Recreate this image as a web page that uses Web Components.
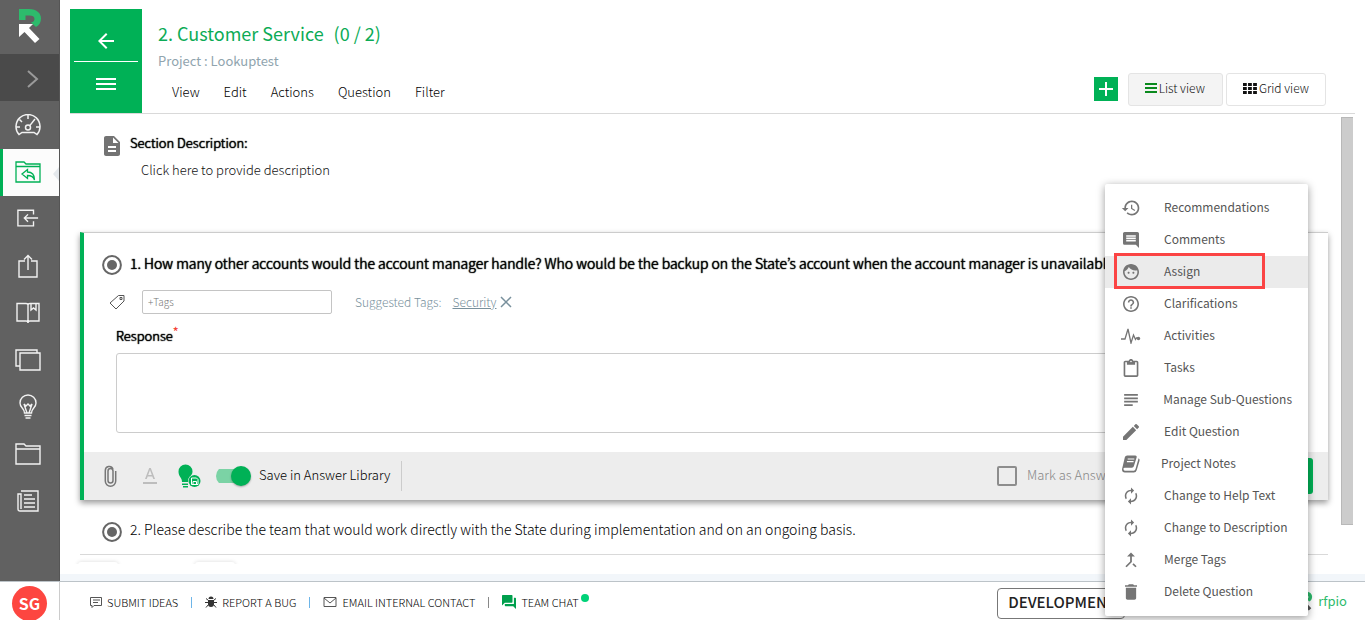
<!DOCTYPE html>
<html lang="en">
<head>
<meta charset="utf-8">
<title>Customer Service - Lookuptest</title>
<style>
html,body{margin:0;height:100%}
body{font-family:"Noto Sans CJK KR","Open Sans",sans-serif;font-size:13px;font-weight:300;line-height:20px;color:#222;background:#fff;overflow:hidden;--strong:0 0 1px #000,0 0 1px #000}
</style>
</head>
<body>
<rfp-app></rfp-app>
<script>
const define = (tag, css, html, init) => customElements.define(tag, class extends HTMLElement {
  constructor() {
    super();
    const t = document.createElement('template');
    t.innerHTML = `<style>*{box-sizing:border-box}${css}</style>${html}`;
    this.attachShadow({mode: 'open'}).append(t.content.cloneNode(true));
  }
  connectedCallback() { if (init) init(this, this.shadowRoot); }
});

const line = (w, d) => `<g fill="none" stroke="currentColor" stroke-width="${w}">${d}</g>`;
const ICONS = {
  back: ['0 0 24 24', '<path d="M20 11H7.83l5.59-5.59L12 4l-8 8 8 8 1.41-1.41L7.83 13H20z"/>'],
  bars: ['0 0 20 14', '<path d="M0 1h20v2H0zM0 6h20v2H0zM0 11h20v2H0z"/>'],
  list: ['0 0 12 10', '<path d="M0 0h12v2H0zM0 4h12v2H0zM0 8h12v2H0z"/>'],
  chevron: ['0 0 12 18', line(2, '<path d="M1 1l9 8-9 8"/>')],
  gauge: ['0 0 26 22', line(1.5, '<path d="M4 20.500A12 12 0 1 1 22 20.500L19 18.500H7z"/><circle cx="13" cy="13.500" r="2.500"/><path d="M14.800 11.600L20 5M13 1v4M1 13h4M21 13h4M4.500 5.500L7 8"/>')],
  reply: ['0 0 26 22', line(1.3, '<path d="M1 21V1h8l2 2h14v18zM1 5.500h24"/><path d="M12.500 8.500L7 13l5.500 4.500v-3c4 0 6 1 7 4.500 0-5-2-8-7-8z"/>')],
  exit: ['0 0 24 20', line(1.5, '<path d="M18 5.500V1H1v17h17v-5M23 9.500H8M12 5.500l-4 4 4 4"/>')],
  share: ['0 0 20 24', line(1.4, '<path d="M7 7H1v16h18V7h-6M10 16V1.500M6 5.500l4-4 4 4"/>')],
  book: ['0 0 24 22', line(1.4, '<path d="M1 1.500h9q2 0 2 1.500 0-1.500 2-1.500h9V19H14q-2 0-2 2 0-2-2-2H1zM12 2v18M15 2v6l2.500-2L20 8V2"/>')],
  copies: ['0 0 26 22', line(1.4, '<path d="M5 4h20v17H5zM5 17H1V1h21v3"/>')],
  bulb: ['0 0 18 26', line(1.4, '<path d="M5.500 19c0-5-4.500-5-4.500-10a8 8 0 0 1 16 0c0 5-4.500 5-4.500 10zM8 19L5 10l2 2 2-2 2 2 2-2-3 9M5.500 21.500h7M6.500 24h5"/>')],
  folder: ['0 0 26 22', line(1.4, '<path d="M1 21V1h8l2 2h14v18zM1 6h24"/>')],
  news: ['0 0 22 22', line(1.4, '<path d="M4 1h17v20H3q-2 0-2-2V4h3v15M7 5h8M7 9h11M7 13h11M7 17h11"/>')],
  doc: ['4 2 16 20', '<path d="M14 2H6c-1.100 0-2 .9-2 2v16c0 1.100.9 2 2 2h12c1.100 0 2-.9 2-2V8zm2 16H8v-2h8zm0-4H8v-2h8zm-3-5V3.500L18.500 9z"/>'],
  radio: ['0 0 20 20', '<circle cx="10" cy="10" r="8.900" fill="none" stroke="currentColor" stroke-width="2"/><circle cx="10" cy="10" r="5"/>'],
  tag: ['0 0 16 16', line(1, '<path d="M9.500 1.500H15V7l-8 8L1 9zM11 3.500h2v2h-2z"/>')],
  cross: ['0 0 12 12', line(1.5, '<path d="M1 1l10 10M11 1L1 11"/>')],
  clip: ['0 0 12 22', line(1.5, '<path d="M8.500 6v9.500a2.500 2.500 0 0 1-5 0V6M3.500 6a2.200 2.200 0 0 1 5 0M11.200 6v10a5.200 5.200 0 0 1-10.400 0V5.500a4 4 0 0 1 7.700-1.500"/>')],
  fontcolor: ['0 0 14 16', '<path d="M0 14h14v2H0zM6.200 0L2 11h1.700l1-2.600h4.600l1 2.600H12L7.800 0zM5.200 7L7 2l1.800 5z"/>'],
  bulbsave: ['0 0 23 24', '<path d="M4 18c0-5-3.500-5-3.500-10.500a7 7 0 0 1 14 0C14.500 10 13 11 12 13l-2 5zM4 19.500h6V21H4zM5 22h5v1.500H5z"/><circle cx="16.500" cy="17" r="6.500" fill="#ededed"/><circle cx="16.500" cy="17" r="6"/><path d="M13.500 14h5l1.500 1.500v5h-6.500zM15 20v-2.500h3.500V20" fill="none" stroke="#fff" stroke-width="1"/>'],
  grid: ['0 0 13 10', '<path d="M0 0h3.500v2.600H0zM4.700 0h3.500v2.600H4.700zM9.400 0h3.500v2.600H9.400zM0 3.700h3.500v2.600H0zM4.700 3.700h3.500v2.600H4.700zM9.400 3.700h3.500v2.600H9.400zM0 7.400h3.500V10H0zM4.700 7.400h3.500V10H4.700zM9.400 7.400h3.500V10H9.400z"/>'],
  plus: ['0 0 16 16', '<path d="M7 1h2v6h6v2H9v6H7V9H1V7h6z"/>'],
  history: ['0 0 24 24', '<path d="M13.500 8H12v5l4.280 2.540.72-1.210-3.500-2.080zM13 3c-4.970 0-9 4.030-9 9H1l4 4 4-4H6c0-3.860 3.140-7 7-7s7 3.140 7 7-3.140 7-7 7c-1.900 0-3.620-.76-4.880-1.990L6.700 18.420C8.320 20.010 10.550 21 13 21c4.970 0 9-4.030 9-9s-4.030-9-9-9z"/>'],
  comment: ['2 2 20 20', '<path d="M21.990 4c0-1.100-.89-2-1.990-2H4c-1.100 0-2 .9-2 2v12c0 1.100.9 2 2 2h14l4 4zM18 14H6v-2h12zm0-3H6V9h12zm0-3H6V6h12z"/>'],
  face: ['2 2 20 20', '<path d="M9 11.750c-.69 0-1.250.56-1.250 1.250s.56 1.250 1.250 1.250 1.250-.56 1.250-1.250-.56-1.250-1.250-1.250zm6 0c-.69 0-1.250.56-1.250 1.250s.56 1.250 1.250 1.250 1.250-.56 1.250-1.250-.56-1.250-1.250-1.250zM12 2C6.480 2 2 6.480 2 12s4.480 10 10 10 10-4.480 10-10S17.520 2 12 2zm0 18c-4.410 0-8-3.590-8-8 0-.29.02-.58.05-.86 2.360-1.050 4.230-2.980 5.210-5.370C11.070 8.330 14.050 10 17.420 10c.78 0 1.530-.09 2.250-.26.210.71.330 1.470.330 2.260 0 4.410-3.590 8-8 8z"/>'],
  help: ['2 2 20 20', '<path d="M11 18h2v-2h-2zm1-16C6.480 2 2 6.480 2 12s4.480 10 10 10 10-4.480 10-10S17.520 2 12 2zm0 18c-4.410 0-8-3.590-8-8s3.590-8 8-8 8 3.590 8 8-3.590 8-8 8zm0-14c-2.210 0-4 1.790-4 4h2c0-1.100.9-2 2-2s2 .9 2 2c0 2-3 1.750-3 5h2c0-2.250 3-2.500 3-5 0-2.210-1.790-4-4-4z"/>'],
  pulse: ['0 0 20 16', line(1.300, '<path d="M0 11h4L7 1l3 14 2.500-8 2 4.500 1-1.500H18"/>') + '<circle cx="17.500" cy="10.500" r="1.700"/>'],
  clipboard: ['3 0 18 22', '<path d="M19 2h-4.180C14.400.84 13.300 0 12 0S9.600.84 9.180 2H5c-1.100 0-2 .9-2 2v16c0 1.100.9 2 2 2h14c1.100 0 2-.9 2-2V4c0-1.100-.9-2-2-2zm-7 0c.55 0 1 .45 1 1s-.45 1-1 1-1-.45-1-1 .45-1 1-1zm7 18H5V4h2v3h10V4h2z"/>'],
  subject: ['4 5 16 14', '<path d="M14 17H4v2h10zm6-8H4v2h16zM4 15h16v-2H4zM4 5v2h16V5z"/>'],
  edit: ['3 3 18 18', '<path d="M3 17.250V21h3.750L17.810 9.940l-3.750-3.750zM20.710 7.040a1 1 0 0 0 0-1.410l-2.340-2.340a1 1 0 0 0-1.410 0l-1.830 1.830 3.750 3.750z"/>'],
  notes: ['0 0 19 18', '<path d="M5.500 0H14q2 0 1.500 2l-3 9.500Q12 13 10.500 13H3q-1.600 0-1.500 1.300Q1.800 16 3 16h9.500q1.200 0 1.700-1.500L17.500 3q1.500 1 1 2.500L15.500 15.500q-.7 2.500-3 2.500H3Q0 18 0 14.500L3 2Q3.500 0 5.500 0z"/><path d="M6 3.800h7M5.200 6.500h7" stroke="#fff" stroke-width="1.100"/>'],
  cycle: ['3 1 18 22', '<path d="M12 6v3l4-4-4-4v3c-4.420 0-8 3.580-8 8 0 1.570.46 3.030 1.240 4.260L6.700 14.800A5.870 5.870 0 0 1 6 12c0-3.310 2.690-6 6-6zm6.760 1.740L17.300 9.200c.44.84.7 1.790.7 2.800 0 3.310-2.690 6-6 6v-3l-4 4 4 4v-3c4.420 0 8-3.580 8-8 0-1.570-.46-3.030-1.240-4.260z"/>'],
  merge: ['4 2 16 20', '<path d="M17 20.410L18.410 19 15 15.590 13.590 17zM7.500 8H11v5.590L5.590 19 7 20.410l6-6V8h3.500L12 3.500z"/>'],
  trash: ['5 3 14 18', '<path d="M6 19c0 1.100.9 2 2 2h8c1.100 0 2-.9 2-2V7H6zM19 4h-3.500l-1-1h-5l-1 1H5v2h14z"/>'],
  idea: ['0 0 12 11', line(1, '<path d="M.5.500h11v8H4l-2 2v-2H.5zM3 3h7M3 5.500h5"/>')],
  bug: ['0 0 12 12', '<path d="M3.500 3a2.500 2.500 0 0 1 5 0zM3 4h6v4a3 3 0 0 1-6 0z"/>' + line(1, '<path d="M1 2.500l2.500 2M11 2.500l-2.500 2M0 6.500h12M1 11.500l2.500-3M11 11.500l-2.500-3"/>')],
  mail: ['0 0 13 10', line(1, '<path d="M.5.500h12v9H.5zM.5 1l6 5 6-5"/>')],
  chat: ['2 2 20 20', '<path d="M21 6h-2v9H6v2c0 .55.450 1 1 1h11l4 4V7c0-.55-.45-1-1-1zm-4 6V3c0-.55-.45-1-1-1H3c-.55 0-1 .45-1 1v14l4-4h10c.55 0 1-.45 1-1z"/>'],
  logo: ['0 0 24 36', '<path fill="#2dbb6c" d="M1 1h10c8 0 12 4.500 12 9.500 0 4-2 7-5 8.500l-5-4.500c2.500-.5 3.500-2 3.500-3.500 0-2.500-2-3.500-5-3.500H7.500V12H1z"/><path d="M1 16h14l-4 4L21.500 31 17 35 6.500 24 1 29z"/>']
};

define('rfp-icon', ':host{display:block;flex:none}svg{display:block;width:100%;height:100%;fill:currentColor}', '<svg aria-hidden="true"></svg>', (el, root) => {
  const [box, body] = ICONS[el.getAttribute('name')];
  const s = root.querySelector('svg');
  s.setAttribute('viewBox', box);
  s.innerHTML = body;
  el.style.width = el.getAttribute('w') + 'px';
  el.style.height = el.getAttribute('h') + 'px';
});

define('nav-item', `
:host{display:block;height:47px}
a{height:100%;display:flex;align-items:center;justify-content:center;padding:0 4px 2px 0;color:#f2f2f2}
:host([active]) a{background:#fcfcfc;border-left:3px solid #00b156;padding-right:7px;color:#00b156;position:relative}
:host([active]) a::after{content:"";position:absolute;right:0;top:18px;border:solid transparent;border-width:7px 6px 7px 0;border-right-color:#e4e8ec}
`, '<a href="#"><slot></slot></a>', (el, root) => root.querySelector('a').setAttribute('aria-label', el.getAttribute('label')));

define('side-nav', `
:host{display:block;background:#616161;border-right:1px solid #555}
.logo{height:54px;display:flex;justify-content:center;padding-top:8px;color:#fff}
.open{display:flex;align-items:center;justify-content:center;width:100%;height:47px;border:0;background:#4a4a4a;color:#9a9a9a;padding:3px 0 0 6px}
nav{padding-top:1px}
`, `
<div class="logo"><rfp-icon name="logo" w="24" h="36"></rfp-icon></div>
<button class="open" aria-label="Expand menu"><rfp-icon name="chevron" w="12" h="18"></rfp-icon></button>
<nav>
<nav-item label="Dashboard"><rfp-icon name="gauge" w="26" h="22"></rfp-icon></nav-item>
<nav-item label="Projects" active><rfp-icon name="reply" w="26" h="22"></rfp-icon></nav-item>
<nav-item label="Import"><rfp-icon name="exit" w="22" h="19"></rfp-icon></nav-item>
<nav-item label="Export"><rfp-icon name="share" w="20" h="24"></rfp-icon></nav-item>
<nav-item label="Library"><rfp-icon name="book" w="24" h="22"></rfp-icon></nav-item>
<nav-item label="Templates"><rfp-icon name="copies" w="26" h="22"></rfp-icon></nav-item>
<nav-item label="Ideas"><rfp-icon name="bulb" w="18" h="26"></rfp-icon></nav-item>
<nav-item label="Files"><rfp-icon name="folder" w="26" h="22"></rfp-icon></nav-item>
<nav-item label="Reports"><rfp-icon name="news" w="22" h="22"></rfp-icon></nav-item>
</nav>`);

define('view-button', `
:host{display:block}
button{display:flex;align-items:center;gap:2px;height:33px;padding:0 16px 3px;border:1px solid #e4e4e4;border-radius:3px;background:#fff;font:inherit;font-size:12px;color:#111}
:host([selected]) button{background:#f4f4f4;padding-right:17px}
`, '<button><slot></slot></button>');

define('page-header', `
:host{display:flex;margin:0 10px;padding-top:9px;border-bottom:1px solid #d9d9d9}
.tile{width:72px;background:#00b156;padding:0 4px;display:flex;flex-direction:column}
.tile button{border:0;background:none;color:#fff;height:51px;padding:0;display:flex;align-items:center;justify-content:center}
.tile button:first-child{border-bottom:1px solid #fff;height:53px;padding-top:11px}
.tile button:last-child{padding-bottom:7px}
.text{flex:1;padding:11px 0 0 16px}
h1{margin:0;font-size:18px;line-height:26px;font-weight:400;color:#0cab56;display:flex;gap:10px}
p{margin:5px 0 0;color:#90a4ae;font-size:13px;font-weight:400;line-height:20px}
nav{display:flex;gap:24px;padding:11px 14px 0}
nav a{color:#000;text-decoration:none;font-size:13px}
.views{display:flex;align-items:flex-end;gap:3px;padding:0 29px 7px 0}
.add{width:24px;height:24px;border:0;background:#00b156;color:#fff;padding:4px;margin:0 7px 5px 0}
`, `
<div class="tile"><button aria-label="Back"><rfp-icon name="back" w="24" h="24"></rfp-icon></button><button aria-label="Sections"><rfp-icon name="bars" w="20" h="14"></rfp-icon></button></div>
<div class="text"><h1><span>2. Customer Service</span><span>(0 / 2)</span></h1><p>Project : Lookuptest</p>
<nav><a href="#">View</a><a href="#">Edit</a><a href="#">Actions</a><a href="#">Question</a><a href="#">Filter</a></nav></div>
<div class="views"><button class="add" aria-label="Add"><rfp-icon name="plus" w="16" h="16"></rfp-icon></button>
<view-button selected><rfp-icon name="list" w="12" h="10" style="color:#0b8a1e"></rfp-icon>List view</view-button>
<view-button><rfp-icon name="grid" w="14" h="11"></rfp-icon>Grid view</view-button></div>`);

define('section-description', `
:host{display:flex;gap:10px;padding:19px 24px 0;height:118px}
h2{margin:0;font-size:13px;line-height:20px;font-weight:300;color:#000;text-shadow:var(--strong)}
p{margin:7px 0 0 11px;line-height:20px;font-size:13px;color:#111}
rfp-icon{color:#737373;margin-top:3px}
`, '<rfp-icon name="doc" w="16" h="20"></rfp-icon><div><h2>Section Description:</h2><p>Click here to provide description</p></div>');

define('question-card', `
:host{display:block;border-left:4px solid #00b156;border-top:1px solid #ccc;background:#fff;box-shadow:0 3px 6px rgba(0,0,0,.4)}
h2{display:flex;gap:8px;margin:0;padding:19px 18px 0;font-size:14px;line-height:22px;font-weight:300;color:#000;white-space:nowrap;overflow:hidden;text-shadow:var(--strong)}
h2 rfp-icon{color:#666;margin-top:3px}
.tags{display:flex;align-items:center;padding:15px 0 0 25px;color:#78909c;font-size:12px}
.tags>rfp-icon{color:#555;margin-right:17px}
.tags input{width:190px;height:24px;border:1px solid #c4c4c4;border-radius:2px;padding:0 5px 2px;font:inherit;font-size:10px;margin-right:23px}
.tags input::placeholder{color:#777;opacity:1}
.tags a{color:inherit;margin:0 4px 0 11px}
.tags button{border:0;background:none;color:#78909c;padding:0}
.resp{padding:12px 32px 0}
.resp label{display:block;font-size:13px;line-height:20px;color:#000;text-shadow:var(--strong)}
sup{color:#f44336;font-size:12px;line-height:0;text-shadow:none;font-weight:500}
textarea{display:block;width:100%;height:80px;margin-top:7px;border:1px solid #ccc;border-radius:3px;resize:none;font:inherit}
.bar{display:flex;align-items:center;height:48px;margin-top:19px;background:#ededed;padding:0 15px 0 20px;color:#000}
.bar button{border:0;background:none;padding:0}
.clip{color:#777;margin-right:26px}.a{color:#bdbdbd;margin-right:21px}.b{color:#00b156;margin-right:15px}
.sw{appearance:none;margin:0 8px 0 0;width:35px;height:20px;display:flex;align-items:center;background:linear-gradient(#7bd3a5,#7bd3a5) 0 3px/28px 14px no-repeat;border-radius:10px 0 0 10px}
.sw::after{content:"";width:20px;height:20px;border-radius:50%;background:#00b156;margin-left:15px;box-shadow:0 1px 2px rgba(0,0,0,.3)}
.save{padding-right:11px;border-right:1px solid #ccc;line-height:28px;padding-bottom:2px;flex:none}
.mark{display:flex;align-items:center;gap:10px;margin-left:auto;color:#888;width:236px}
.mark label{padding-bottom:2px}
.mark input{appearance:none;width:20px;height:20px;margin:0;border:2px solid #8d8d8d;border-radius:2px}
.bar .go{width:80px;height:36px;border-radius:3px;background:#00b156;color:#fff;font:inherit}
`, `
<h2><rfp-icon name="radio" w="20" h="20"></rfp-icon><span>1. How many other accounts would the account manager handle? Who would be the backup on the State’s account when the account manager is unavailable?</span></h2>
<div class="tags"><rfp-icon name="tag" w="16" h="16"></rfp-icon><input aria-label="Tags" placeholder="+Tags"><span>Suggested Tags:</span><a href="#">Security</a><button aria-label="Remove tag"><rfp-icon name="cross" w="12" h="12"></rfp-icon></button></div>
<div class="resp"><label for="r">Response<sup>*</sup></label><textarea id="r"></textarea></div>
<div class="bar"><button class="clip" aria-label="Attach"><rfp-icon name="clip" w="13" h="22"></rfp-icon></button>
<button class="a" aria-label="Text colour"><rfp-icon name="fontcolor" w="14" h="16"></rfp-icon></button>
<button class="b" aria-label="Library"><rfp-icon name="bulbsave" w="23" h="24"></rfp-icon></button>
<input class="sw" type="checkbox" id="s" checked><label class="save" for="s">Save in Answer Library</label>
<span class="mark"><input type="checkbox" id="m"><label for="m">Mark as Answered</label></span><button class="go">Save</button></div>`);

define('question-row', `
:host{display:flex;gap:8px;height:55px;padding:18px 22px 0;border-bottom:1px solid #d9d9d9;font-size:14px;line-height:22px;color:#000}
rfp-icon{color:#666;margin-top:4px}
`, '<rfp-icon name="radio" w="20" h="20"></rfp-icon><span><slot></slot></span>');

define('pager-bar', `
:host{display:flex;gap:77px;padding:7px 2px 0}
span{width:40px;height:20px;border-radius:3px;box-shadow:0 0 4px rgba(0,0,0,.15)}
`, '<span></span><span></span>');

const row = (icon, w, h, text, flags = '') => `<action-row ${flags}><rfp-icon slot="icon" name="${icon}" w="${w}" h="${h}"></rfp-icon>${text}</action-row>`;
define('action-row', `
:host{display:block;position:relative}
button{display:flex;align-items:center;width:100%;height:32px;border:0;background:none;padding:0 16px;gap:23px;font:inherit;font-size:12px;font-weight:400;color:#555;text-align:left;white-space:nowrap}
.i{width:20px;display:flex;justify-content:center;color:#757575}
.t{padding-bottom:2px}
:host([active]) button{background:#ebebeb}
:host([wide]) button{gap:20px}
:host([marked])::after{content:"";position:absolute;left:9px;top:-3px;width:151px;height:36px;border:3px solid #fb4444;box-sizing:border-box}
`, '<button role="menuitem"><span class="i"><slot name="icon"></slot></span><span class="t"><slot></slot></span></button>');

define('action-menu', `
:host{display:block;width:203px;padding:8px 0;background:#fff;border-radius:2px;box-shadow:0 2px 8px rgba(0,0,0,.4)}
`, '<div role="menu">' +
  row('history', 20, 20, 'Recommendations') + row('comment', 16, 16, 'Comments') +
  row('face', 16, 16, 'Assign', 'active marked') + row('help', 16, 16, 'Clarifications') +
  row('pulse', 20, 16, 'Activities') + row('clipboard', 16, 18, 'Tasks') +
  row('subject', 14, 12, 'Manage Sub-Questions') + row('edit', 16, 16, 'Edit Question') +
  row('notes', 18, 18, 'Project Notes', 'wide') + row('cycle', 14, 18, 'Change to Help Text') +
  row('cycle', 14, 18, 'Change to Description') + row('merge', 14, 18, 'Merge Tags') +
  row('trash', 12, 16, 'Delete Question') + '</div>');

define('footer-link', `
:host{display:block}
a{display:flex;align-items:center;gap:5px;color:#000;text-decoration:none}
`, '<a href="#"><slot></slot></a>');

define('app-footer', `
:host{display:flex;height:39px;border-top:1px solid #bcc3c8;font-size:11px;line-height:16px;background:#fff}
.me{width:60px;border-right:1px solid #ccc;padding:4px 0 0 12px;overflow:hidden;flex:none}
.me b{display:flex;align-items:center;justify-content:center;width:35px;height:35px;border-radius:50%;background:#fd4640;color:#fff;font-size:16px;font-weight:700;padding-bottom:2px}
.links{display:flex;align-items:center;gap:13px;padding:2px 0 0 30px;flex:1}
.links i{width:1px;height:11px;background:#6db5e8}
.links i.d{background:#888}
.dot{width:8px;height:8px;border-radius:50%;background:#00d278;margin:-8px 0 0 -3px}
.env{width:128px;height:31px;margin:6px 174px 0 0;border:1px solid #777;border-radius:4px;font-size:15px;line-height:26px;font-weight:500;color:#222;padding-left:10px;overflow:hidden}
.brand{display:flex;align-items:center;gap:5px;color:#2dbb6c;font-size:13px;font-weight:400;margin-right:18px}
`, `
<div class="me"><b>SG</b></div>
<div class="links"><footer-link><rfp-icon name="idea" w="12" h="11" style="color:#555"></rfp-icon>SUBMIT IDEAS</footer-link><i></i>
<footer-link><rfp-icon name="bug" w="12" h="12" style="color:#333"></rfp-icon>REPORT A BUG</footer-link><i></i>
<footer-link><rfp-icon name="mail" w="14" h="10" style="color:#555"></rfp-icon>EMAIL INTERNAL CONTACT</footer-link><i class="d"></i>
<footer-link><rfp-icon name="chat" w="14" h="14" style="color:#009f4d"></rfp-icon>TEAM CHAT<span class="dot"></span></footer-link></div>
<div class="env">DEVELOPMENT</div>
<div class="brand"><rfp-icon name="logo" w="14" h="20" style="color:#555"></rfp-icon>rfpio</div>`);

define('rfp-app', `
:host{display:flex;flex-direction:column;height:100vh;position:relative;overflow:hidden}
.top{display:flex;flex:1;min-height:0}
side-nav{width:60px;flex:none}
main{flex:1;min-width:0;display:flex;flex-direction:column;border-bottom:7px solid #f2f6fa}
.body{flex:1;min-height:0;display:flex;margin-bottom:10px;padding-right:12px}
.list{flex:1;min-width:0;overflow:hidden;padding:0 13px 0 16px}
.list>*{margin-left:4px}
.list>pager-bar{margin-left:0}
.bar{width:12px;height:408px;margin-top:3px;background:#ccc;border:1px solid #b8b8b8;border-width:1px 0 1px 1px}
app-footer{flex:none}
action-menu{position:absolute;right:57px;bottom:4px}
`, `
<div class="top"><side-nav></side-nav><main><page-header></page-header>
<div class="body"><div class="list"><section-description></section-description><question-card></question-card>
<question-row>2. Please describe the team that would work directly with the State during implementation and on an ongoing basis.</question-row><pager-bar></pager-bar></div>
<div class="bar"></div></div></main></div>
<app-footer></app-footer><action-menu></action-menu>`);
</script>
</body>
</html>
